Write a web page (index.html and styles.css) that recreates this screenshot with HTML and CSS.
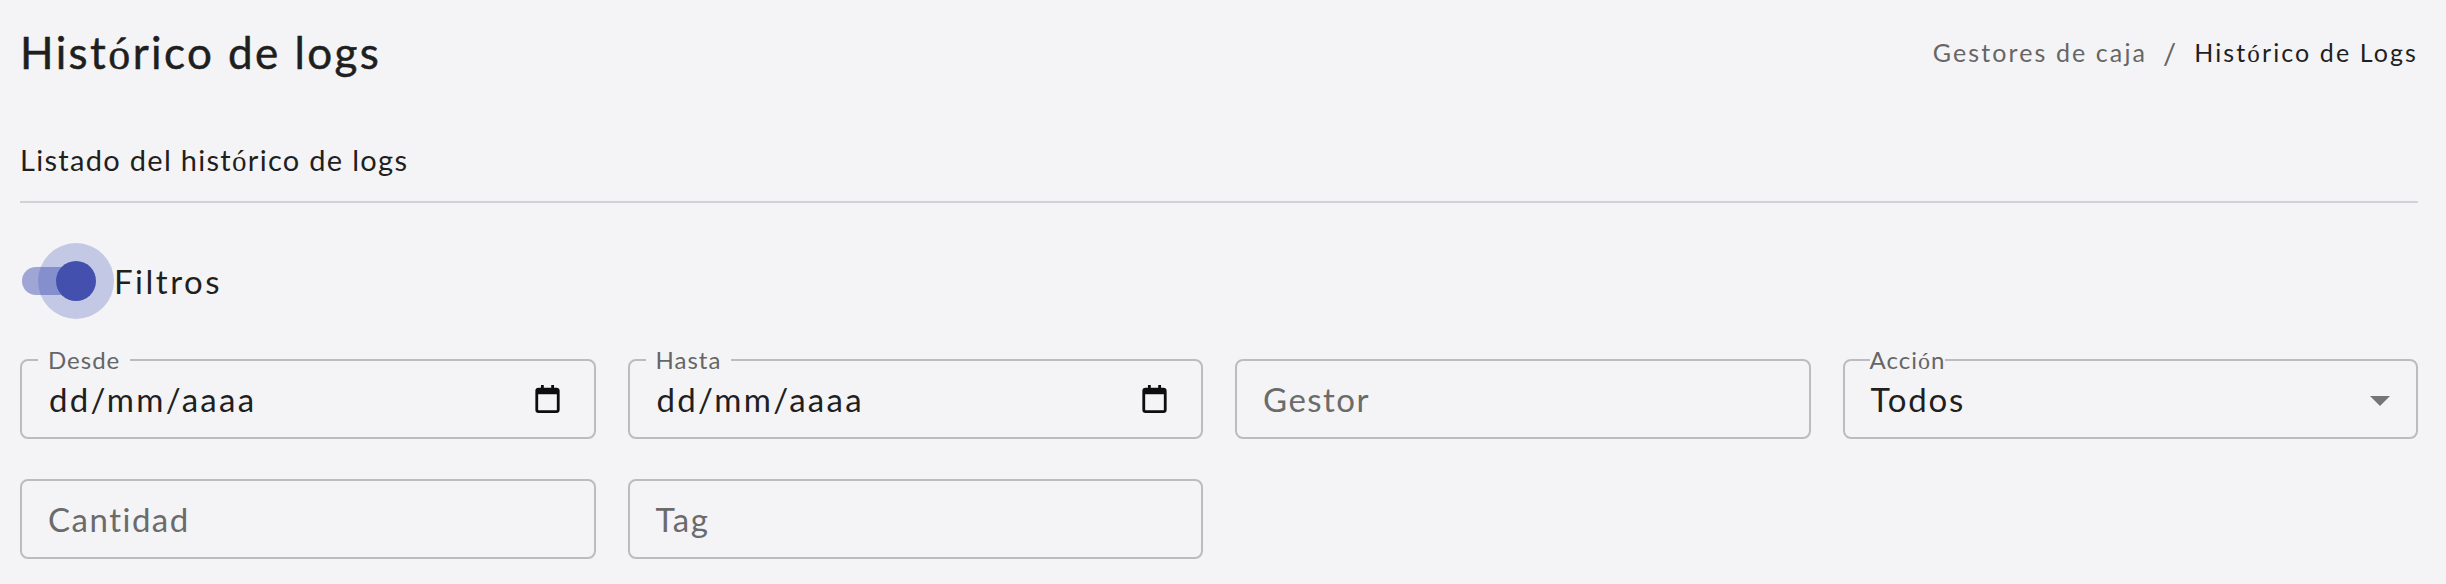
FILE: index.html
```html
<!DOCTYPE html>
<html lang="es">
<head>
    <meta charset="UTF-8">
    <title>Histórico de logs</title>
    <link rel="stylesheet" href="styles.css">
</head>
<body>
    <div class="page">
        <header class="page-header">
            <h1 class="page-title">Hist<span class="fallback">ó</span>rico de logs</h1>
            <nav class="breadcrumb">
                <span class="crumb-link">Gestores de caja</span>
                <span class="crumb-sep">/</span>
                <span class="crumb-current">Hist<span class="fallback">ó</span>rico de Logs</span>
            </nav>
        </header>

        <div class="subtitle">Listado del hist<span class="fallback">ó</span>rico de logs</div>

        <div class="filter-toggle">
            <span class="switch">
                <span class="switch-track"></span>
                <span class="switch-halo"></span>
                <span class="switch-thumb"></span>
            </span>
            <span class="filter-label">Filtros</span>
        </div>

        <div class="filters">
            <div class="field">
                <span class="field-label">Desde</span>
                <span class="field-value date-value">dd/mm/aaaa</span>
                <svg class="calendar" viewBox="0 0 26 30">
                    <path d="M6 0h3v3h8V0h3v3h2.500A3.500 3.500 0 0 1 26 6.500v20a3.500 3.500 0 0 1-3.500 3.500h-19A3.500 3.500 0 0 1 0 26.500v-20A3.500 3.500 0 0 1 3.500 3H6zM3 10v16.500a.5.5 0 0 0 .5.5h19a.5.5 0 0 0 .5-.5V10z"/>
                </svg>
            </div>
            <div class="field">
                <span class="field-label">Hasta</span>
                <span class="field-value date-value">dd/mm/aaaa</span>
                <svg class="calendar" viewBox="0 0 26 30">
                    <path d="M6 0h3v3h8V0h3v3h2.500A3.500 3.500 0 0 1 26 6.500v20a3.500 3.500 0 0 1-3.500 3.500h-19A3.500 3.500 0 0 1 0 26.500v-20A3.500 3.500 0 0 1 3.500 3H6zM3 10v16.500a.5.5 0 0 0 .5.5h19a.5.5 0 0 0 .5-.5V10z"/>
                </svg>
            </div>
            <div class="field">
                <span class="field-value placeholder">Gestor</span>
            </div>
            <div class="field">
                <span class="field-label tight">Acci<span class="fallback">ó</span>n</span>
                <span class="field-value select-value">Todos</span>
                <svg class="caret" viewBox="0 0 20 10"><path d="M0 0h20L10 10z"/></svg>
            </div>
            <div class="field">
                <span class="field-value placeholder">Cantidad</span>
            </div>
            <div class="field">
                <span class="field-value placeholder">Tag</span>
            </div>
        </div>
    </div>
</body>
</html>
```

FILE: styles.css
```css
* {
    box-sizing: border-box;
}

body {
    margin: 0;
    height: 584px;
    overflow: hidden;
    background: #f4f4f6;
    color: #1f1f1f;
    font-family: Lato, "Noto Sans", sans-serif;
}

.page {
    padding: 0 28px 0 20px;
}

.fallback {
    font-family: "Liberation Serif", serif;
}

.page-header {
    display: flex;
    justify-content: space-between;
    align-items: center;
    height: 106px;
}

.page-title {
    margin: 0;
    font-size: 44px;
    font-weight: 400;
    letter-spacing: 2.4px;
    -webkit-text-stroke: 0.5px #1f1f1f;
}

.breadcrumb {
    display: flex;
    align-items: center;
    margin-top: -2px;
    font-size: 25px;
    letter-spacing: 2.1px;
}

.crumb-link {
    color: #666;
}

.crumb-sep {
    margin: 0 16px;
    color: #666;
    font-size: 29px;
}

.subtitle {
    height: 97px;
    padding-top: 36px;
    border-bottom: 2px solid #d2d2d6;
    font-size: 29px;
    line-height: 36px;
    letter-spacing: 1.3px;
}

.filter-toggle {
    display: flex;
    align-items: center;
    height: 76px;
    margin-top: 40px;
}

.switch {
    position: relative;
    display: block;
    width: 94px;
    height: 76px;
}

.switch-track {
    position: absolute;
    left: 2px;
    top: 24px;
    width: 68px;
    height: 28px;
    border-radius: 14px;
    background: #9fa6d6;
}

.switch-halo {
    position: absolute;
    left: 18px;
    top: 0;
    width: 76px;
    height: 76px;
    border-radius: 50%;
    background: rgba(63, 81, 181, 0.27);
}

.switch-thumb {
    position: absolute;
    left: 36px;
    top: 18px;
    width: 40px;
    height: 40px;
    border-radius: 50%;
    background: #4450ae;
}

.filter-label {
    font-size: 33px;
    letter-spacing: 2.5px;
}

.filters {
    display: grid;
    grid-template-columns: repeat(4, 1fr);
    column-gap: 32px;
    row-gap: 40px;
    margin-top: 40px;
}

.field {
    position: relative;
    display: flex;
    align-items: center;
    justify-content: space-between;
    height: 80px;
    padding: 0 34px 0 26px;
    border: 2px solid #bcbcbe;
    border-radius: 8px;
}

/* sits on the top border, the page colour makes the notch */
.field-label {
    position: absolute;
    left: 16px;
    top: -14px;
    padding: 0 10px;
    background: #f4f4f6;
    color: #666;
    font-size: 24px;
    line-height: 26px;
    letter-spacing: 1px;
}

.field-label.tight {
    left: 25px;
    padding: 0;
}

.field-value {
    font-size: 33px;
    letter-spacing: 1.5px;
}

.placeholder {
    color: #6b6b6b;
}

.date-value {
    margin-left: 1px;
    letter-spacing: 2.3px;
}

.select-value {
    letter-spacing: 1.8px;
}

.calendar {
    width: 25px;
    height: 28px;
    fill: #0d0d0d;
}

.caret {
    width: 20px;
    height: 10px;
    margin: 3px -8px 0 0;
    fill: #757575;
}
```
